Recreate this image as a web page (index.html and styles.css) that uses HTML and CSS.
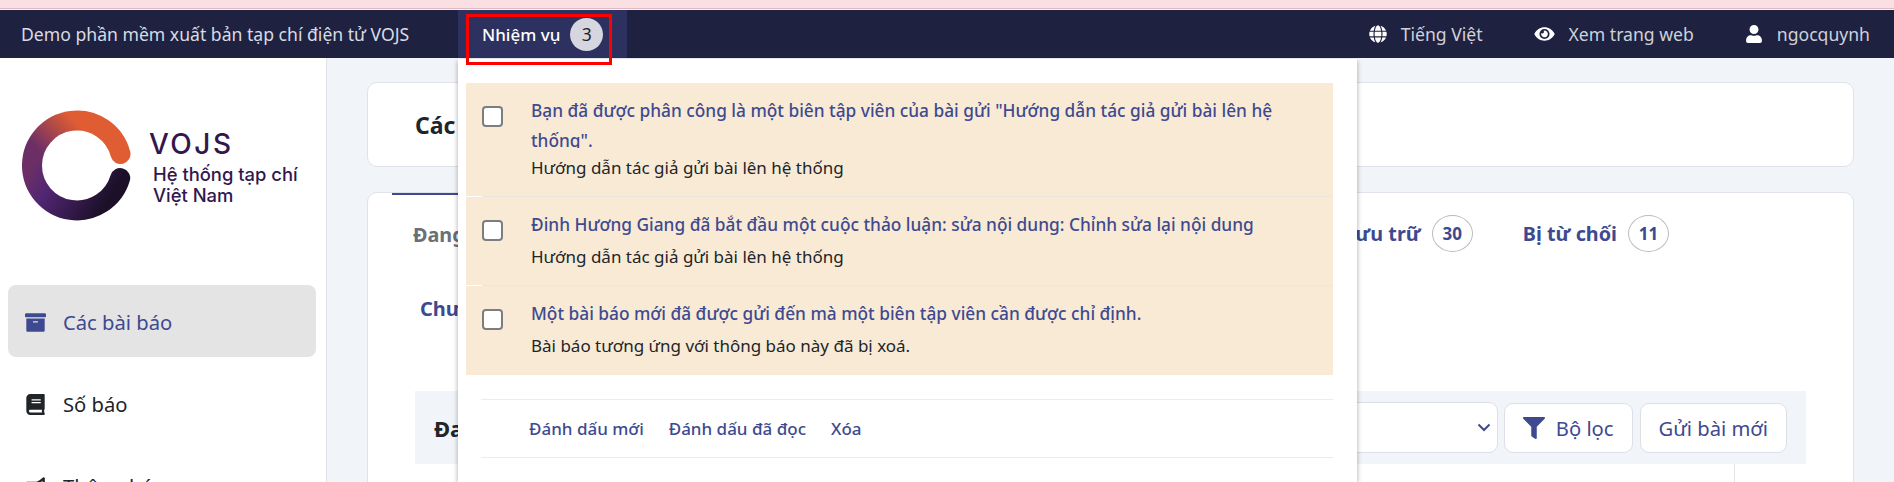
FILE: index.html
```html
<!DOCTYPE html>
<html lang="vi">
<head>
<meta charset="utf-8">
<title>VOJS</title>
<link rel="stylesheet" href="styles.css">
</head>
<body>
<div class="alert"></div>
<header class="topbar">
  <div class="brand">Demo phần mềm xuất bản tạp chí điện tử VOJS</div>
  <div class="task-tab">
    <span class="task-label">Nhiệm vụ</span>
    <span class="task-badge">3</span>
    <span class="red-mark"></span>
    <div class="dropdown">
      <div class="notes">
        <div class="note">
          <input class="check" type="checkbox">
          <div class="note-body">
            <a class="note-title clip">Bạn đã được phân công là một biên tập viên của bài gửi "Hướng dẫn tác giả gửi bài lên hệ thống".</a>
            <p class="note-sub">Hướng dẫn tác giả gửi bài lên hệ thống</p>
          </div>
        </div>
        <div class="note">
          <input class="check" type="checkbox">
          <div class="note-body">
            <a class="note-title">Đinh Hương Giang đã bắt đầu một cuộc thảo luận: sửa nội dung: Chỉnh sửa lại nội dung</a>
            <p class="note-sub">Hướng dẫn tác giả gửi bài lên hệ thống</p>
          </div>
        </div>
        <div class="note">
          <input class="check" type="checkbox">
          <div class="note-body">
            <a class="note-title">Một bài báo mới đã được gửi đến mà một biên tập viên cần được chỉ định.</a>
            <p class="note-sub">Bài báo tương ứng với thông báo này đã bị xoá.</p>
          </div>
        </div>
      </div>
      <div class="note-actions">
        <a>Đánh dấu mới</a>
        <a>Đánh dấu đã đọc</a>
        <a>Xóa</a>
      </div>
    </div>
  </div>
  <div class="top-right">
    <span class="top-item">
      <svg class="top-icon" viewBox="0 0 496 512"><path d="M336.5 160C322 70.7 287.8 8 248 8s-74 62.7-88.5 152h177zM152 256c0 22.2 1.2 43.5 3.3 64h185.3c2.1-20.5 3.3-41.8 3.3-64s-1.2-43.5-3.3-64H155.3c-2.1 20.5-3.3 41.8-3.3 64zm324.7-96c-28.6-67.9-86.5-120.4-158-141.6 24.4 33.8 41.2 84.7 50 141.6h108zM177.2 18.4C105.8 39.6 47.8 92.1 19.3 160h108c8.7-56.9 25.5-107.8 49.9-141.6zM487.4 192H372.7c2.1 21 3.3 42.5 3.3 64s-1.2 43-3.3 64h114.6c5.5-20.5 8.6-41.8 8.6-64s-3.1-43.5-8.5-64zM120 256c0-21.5 1.2-43 3.3-64H8.6C3.2 212.5 0 233.8 0 256s3.2 43.5 8.6 64h114.6c-2-21-3.2-42.5-3.2-64zm39.5 96c14.5 89.3 48.7 152 88.5 152s74-62.7 88.5-152h-177zm159.3 141.6c71.4-21.2 129.4-73.7 158-141.6h-108c-8.8 56.9-25.6 107.8-50 141.6zM19.3 352c28.6 67.9 86.5 120.4 158 141.6-24.4-33.8-41.2-84.7-50-141.6h-108z"/></svg>
      Tiếng Việt
    </span>
    <span class="top-item">
      <svg class="top-icon eye" viewBox="0 0 576 512"><path d="M572.52 241.4C518.29 135.59 410.93 64 288 64S57.68 135.64 3.48 241.41a32.35 32.35 0 0 0 0 29.19C57.71 376.41 165.07 448 288 448s230.32-71.64 284.52-177.41a32.35 32.35 0 0 0 0-29.19zM288 400a144 144 0 1 1 144-144 143.93 143.93 0 0 1-144 144zm0-240a95.31 95.31 0 0 0-25.31 3.79 47.85 47.85 0 0 1-66.9 66.9A95.78 95.78 0 1 0 288 160z"/></svg>
      Xem trang web
    </span>
    <span class="top-item">
      <svg class="top-icon" viewBox="0 0 448 512"><path d="M224 256c70.7 0 128-57.3 128-128S294.7 0 224 0 96 57.3 96 128s57.3 128 128 128zm89.6 32h-16.7c-22.2 10.2-46.9 16-72.9 16s-50.6-5.8-72.9-16h-16.7C60.2 288 0 348.2 0 422.4V464c0 26.5 21.5 48 48 48h352c26.5 0 48-21.5 48-48v-41.6c0-74.2-60.2-134.4-134.4-134.4z"/></svg>
      ngocquynh
    </span>
  </div>
</header>
<div class="page">
  <aside class="sidebar">
    <div class="logo">
      <svg class="logo-ring" viewBox="0 0 111 111">
        <defs>
          <linearGradient id="ringTop" x1="1" y1="0" x2="0" y2="0.5">
            <stop offset="0.42" stop-color="#e05c33"/>
            <stop offset="1" stop-color="#6b2f66"/>
          </linearGradient>
          <linearGradient id="ringBottom" x1="0" y1="0" x2="1" y2="0.3">
            <stop offset="0" stop-color="#6b2f66"/>
            <stop offset="0.3" stop-color="#512673"/>
            <stop offset="1" stop-color="#1c1029"/>
          </linearGradient>
        </defs>
        <path class="ring-top" d="M98.500 44 A45 45 0 0 0 10 55.500"/>
        <path class="ring-bottom" d="M10 55.500 A45 45 0 0 0 98.200 68"/>
      </svg>
      <div class="logo-text">
        <div class="logo-name">VOJS</div>
        <div class="logo-sub">Hệ thống tạp chí<br>Việt Nam</div>
      </div>
    </div>
    <nav class="side-nav">
      <a class="side-item active">
        <svg class="side-icon" viewBox="0 0 512 512"><path d="M32 448c0 17.7 14.3 32 32 32h384c17.7 0 32-14.3 32-32V160H32v288zm160-212c0-6.6 5.4-12 12-12h104c6.6 0 12 5.4 12 12v8c0 6.6-5.4 12-12 12H204c-6.6 0-12-5.4-12-12v-8zM480 32H32C14.3 32 0 46.3 0 64v48c0 8.8 7.2 16 16 16h480c8.8 0 16-7.2 16-16V64c0-17.7-14.3-32-32-32z"/></svg>
        Các bài báo
      </a>
      <a class="side-item">
        <svg class="side-icon" viewBox="0 0 448 512"><path d="M448 360V24c0-13.3-10.7-24-24-24H96C43 0 0 43 0 96v320c0 53 43 96 96 96h328c13.3 0 24-10.7 24-24v-16c0-7.5-3.5-14.3-8.9-18.7-4.2-15.4-4.2-59.3 0-74.7 5.4-4.3 8.9-11.1 8.9-18.6zM128 134c0-3.3 2.7-6 6-6h212c3.3 0 6 2.7 6 6v20c0 3.3-2.7 6-6 6H134c-3.3 0-6-2.7-6-6v-20zm0 64c0-3.3 2.7-6 6-6h212c3.3 0 6 2.7 6 6v20c0 3.3-2.7 6-6 6H134c-3.3 0-6-2.7-6-6v-20zm253.4 250H96c-17.7 0-32-14.3-32-32 0-17.6 14.4-32 32-32h285.4c-1.9 17.1-1.9 46.9 0 64z"/></svg>
        Số báo
      </a>
      <a class="side-item">
        <svg class="side-icon" viewBox="0 0 576 512"><path d="M576 240c0-23.63-12.95-44.04-32-55.12V32.01C544 23.26 537.02 0 512 0c-7.12 0-14.19 2.38-19.98 7.02l-85.03 68.03C364.28 109.19 310.66 128 256 128H64c-35.35 0-64 28.65-64 64v96c0 35.35 28.65 64 64 64h33.7c-1.39 10.48-2.18 21.14-2.18 32 0 39.77 9.26 77.35 25.56 110.94 5.19 10.69 16.52 17.06 28.4 17.06h74.28c26.05 0 41.69-29.84 25.9-50.56-16.4-21.52-26.15-48.36-26.15-77.44 0-11.11 1.62-21.79 4.41-32H256c54.66 0 108.28 18.81 150.98 52.95l85.03 68.03a32.023 32.023 0 0 0 19.98 7.02c24.92 0 32-22.78 32-32V295.13C563.05 284.04 576 263.63 576 240zm-96 141.42l-33.05-26.44C392.95 311.78 325.12 288 256 288v-96c69.12 0 136.95-23.78 190.95-66.98L480 98.58v282.84z"/></svg>
        Thông báo
      </a>
    </nav>
  </aside>
  <main class="main">
    <section class="card head-card">
      <h1 class="page-title">Các bài báo</h1>
    </section>
    <section class="card list-card">
      <div class="tabs">
        <a class="tab current">Đang xử lý</a>
        <a class="tab push">Lưu trữ <span class="count">30</span></a>
        <a class="tab">Bị từ chối <span class="count">11</span></a>
      </div>
      <div class="subtabs"><a class="subtab">Chưa phân công</a></div>
      <div class="table">
        <div class="table-head">
          <h2 class="table-title">Đang xử lý</h2>
          <div class="select"><span class="select-text">Tất cả các mục mới</span>
            <svg class="chev" viewBox="0 0 14 9"><path d="M1.500 1.500 7 7l5.500-5.500"/></svg>
          </div>
          <a class="btn filter">
            <svg class="filter-icon" viewBox="0 0 512 512"><path d="M487.976 0H24.028C2.71 0-8.047 25.866 7.058 40.971L192 225.941V432c0 7.831 3.821 15.17 10.237 19.662l80 55.98C298.02 518.69 320 507.493 320 487.98V225.941l184.947-184.97C520.021 25.896 509.338 0 487.976 0z"/></svg>
            Bộ lọc
          </a>
          <a class="btn">Gửi bài mới</a>
        </div>
        <div class="table-body"><div class="table-col"></div></div>
      </div>
    </section>
  </main>
</div>
</body>
</html>
```

FILE: styles.css
```css
* { box-sizing: border-box; }
html, body { margin: 0; padding: 0; height: 482px; overflow: hidden; }
body { font-family: "Noto Sans", sans-serif; background: #f1f5f9; color: #212529; }
a { color: inherit; text-decoration: none; }
p, h1, h2 { margin: 0; }

.alert { height: 9px; margin-bottom: 1px; background: #fadfe3; border-bottom: 1px solid #dcbcc0; }

.topbar { position: relative; z-index: 5; display: flex; align-items: center; height: 48px; background: #1e2240; color: #d9dbe4; font-size: 17.600px; }
.brand { width: 458px; padding-left: 21px; white-space: nowrap; }
.task-tab { position: relative; display: flex; align-items: center; width: 169px; height: 48px; padding-left: 24px; background: #2d3160; color: #fff; font-size: 17px; font-weight: 500; }
.task-label { white-space: nowrap; }
.task-badge { display: flex; align-items: center; justify-content: center; width: 33px; height: 33px; margin-left: 10px; border-radius: 50%; background: #d5d6df; color: #222; font-size: 17.500px; font-weight: 400; }
.red-mark { position: absolute; z-index: 3; left: 8px; top: 4px; width: 146px; height: 51px; border: 3px solid #f00; }

.dropdown { position: absolute; left: 0; top: 49px; width: 899px; height: 423px; padding: 24px 24px 0 8px; background: #fff; box-shadow: 0 2px 5px rgba(0, 0, 0, .35); font-size: 17px; font-weight: 400; }
.note { position: relative; display: flex; padding: 13px 0 12px 16px; background: #f9ead6; color: #212529; }
.note + .note { margin-top: 1px; }
.note + .note::before { content: ""; position: absolute; left: 16px; right: 0; top: -1px; height: 1px; background: #ece6e0; }
.note:last-child { padding-bottom: 13px; }
.check { appearance: none; flex: none; width: 21px; height: 21px; margin: 10px 28px 0 0; border: 2px solid #7d7d7d; border-radius: 4px; background: #fff; }
.note-body { flex: 1; min-width: 0; padding-right: 20px; }
.note-title { display: block; line-height: 30px; color: #3e4a8f; font-size: 17.300px; font-weight: 500; }
.note-title.clip { height: 52px; margin-bottom: 4px; overflow: hidden; }
.note-title + .note-sub { margin-top: 1px; }
.note-title.clip + .note-sub { margin-top: 0; }
.note-sub { line-height: 32px; }
.note-actions { display: flex; gap: 25px; height: 59px; margin: 24px 0 0 15px; padding-left: 48px; align-items: center; border-top: 1px solid #ebecef; border-bottom: 1px solid #ebecef; color: #3e4a8f; font-weight: 500; font-size: 17px; }

.top-right { display: flex; margin-left: auto; padding-right: 24px; color: #d0d1da; font-size: 17.600px; }
.top-item { display: flex; align-items: center; gap: 14px; margin-left: 51px; white-space: nowrap; }
.top-icon { width: 18px; height: 18px; fill: #fff; }
.top-icon.eye { width: 21px; }

.page { display: flex; height: 424px; }
.sidebar { flex: none; width: 327px; height: 424px; overflow: hidden; padding: 0 10px 0 8px; background: #fff; border-right: 1px solid #dfe2e8; }
.logo { display: flex; align-items: flex-start; height: 227px; padding: 52px 0 0 14px; }
.logo-ring { flex: none; width: 111px; height: 111px; }
.ring-top, .ring-bottom { fill: none; stroke-width: 20; stroke-linecap: round; }
.ring-top { stroke: url(#ringTop); }
.ring-bottom { stroke: url(#ringBottom); }
.logo-text { margin: 18px 0 0 16px; font-family: Inter, sans-serif; font-weight: 500; color: #32174d; }
.logo-name { font-size: 28px; line-height: 32px; letter-spacing: 2.500px; }
.logo-sub { margin: 4px 0 0 4px; font-size: 18.400px; line-height: 21px; }

.side-nav { display: flex; flex-direction: column; gap: 10px; }
.side-item { display: flex; align-items: center; flex: none; gap: 17px; height: 72px; padding: 2px 0 0 17px; border-radius: 8px; font-size: 20.200px; color: #212529; }
.side-item.active { background: #e4e4e4; color: #3e4a8f; }
.side-icon { width: 21px; height: 21px; fill: currentColor; }

.main { flex: 1; min-width: 0; height: 424px; padding: 24px 40px 0; overflow: hidden; }
.card { background: #fff; border: 1px solid #dfe2e8; border-radius: 10px; }
.head-card { display: flex; align-items: center; height: 85px; padding: 1px 0 0 47px; }
.page-title { font-size: 23px; font-weight: 700; }
.list-card { height: 320px; margin-top: 25px; overflow: hidden; }
.tabs { display: flex; align-items: flex-start; padding: 0 184px 0 24px; font-size: 19.800px; font-weight: 700; color: #3e4a8f; }
.tab { display: flex; align-items: center; height: 58px; padding-top: 23px; white-space: nowrap; }
.tab.current { padding-left: 21px; padding-right: 30px; border-top: 2px solid #3e4a8f; color: #6b6f76; }
.tab.push { margin-left: auto; margin-right: 50px; }
.count { display: flex; align-items: center; justify-content: center; flex: none; width: 41px; height: 37px; margin-left: 11px; border: 1px solid #b9bbc4; border-radius: 50%; font-size: 17px; }
.subtabs { height: 84px; padding: 44px 0 0 52px; }
.subtab { font-size: 20px; font-weight: 700; color: #3e4a8f; white-space: nowrap; }
.table { margin: 56px 47px 0; }
.table-head { display: flex; align-items: center; height: 73px; padding: 0 19px; background: #f1f5f9; }
.table-title { margin-right: auto; font-size: 22px; font-weight: 700; white-space: nowrap; }
.select { display: flex; align-items: center; justify-content: flex-end; gap: 123px; width: 290px; height: 51px; padding: 0 6px 0 0; overflow: hidden; background: #fff; border: 1px solid #dcdfe6; border-radius: 9px; color: #3e4a8f; font-size: 20px; }
.select-text { white-space: nowrap; }
.chev { flex: none; width: 14px; height: 9px; fill: none; stroke: #3e4a8f; stroke-width: 2; }
.btn { display: flex; align-items: center; height: 50px; margin-left: 7px; padding: 0 18px; background: #fff; border: 1px solid #dcdfe6; border-radius: 9px; color: #3e4a8f; font-size: 20.200px; white-space: nowrap; }
.filter { gap: 11px; margin-left: 6px; padding: 0 18px; }
.filter-icon { width: 22px; height: 22px; fill: #3e4a8f; }
.table-body { display: flex; justify-content: flex-end; height: 40px; }
.table-col { width: 72px; border-left: 1px solid #e3e5ea; }
```
